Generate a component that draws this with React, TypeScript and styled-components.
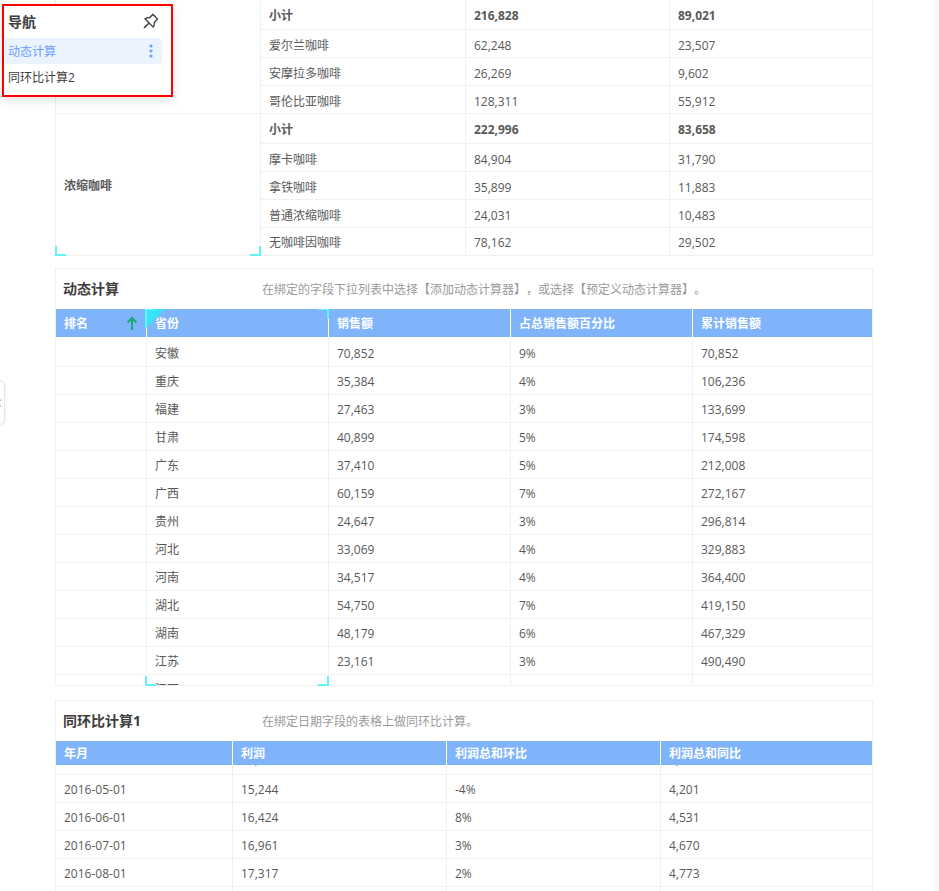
import React from "react";
import styled, { createGlobalStyle } from "styled-components";
import { AiOutlinePushpin } from "react-icons/ai";

const Global = createGlobalStyle`
  html, body { margin: 0; padding: 0; background: #fff; overflow: hidden; }
  body {
    font-family: "Open Sans", "Noto Sans CJK SC", sans-serif;
    font-size: 12px;
    color: #595959;
    text-spacing-trim: space-all;
  }
`;

const LINE = "#f0f0f0";
const CYAN = "#5ef7f7";

const Page = styled.div`
  position: relative;
  display: flex;
  width: 939px;
  height: 891px;
  overflow: hidden;
`;
const Main = styled.main`
  flex: 1;
  padding-left: 55px;
`;
const Gutter = styled.div`
  width: 5px;
  background: #f7f7f7;
`;
const Stack = styled.div`
  width: 818px;
  display: flex;
  flex-direction: column;
`;
const TopFrame = styled.div`
  border: 1px solid ${LINE};
  border-top: 0;
`;
const Card = styled.section<{ $gap: number }>`
  position: relative;
  margin-top: ${(p) => p.$gap}px;
  border: 1px solid ${LINE};
  box-sizing: border-box;
  flex-shrink: 0;
`;
const CardHead = styled.header`
  display: flex;
  align-items: center;
  height: 40px;
  padding-left: 7px;
`;
const CardTitle = styled.h2`
  margin: 0 0 2px;
  width: 199px;
  font-size: 14px;
  font-weight: 700;
  color: #3d3d3d;
`;
const CardDesc = styled.p`
  margin: 0;
  font-size: 12px;
  color: #9a9a9a;
`;
const Table = styled.table`
  width: 816px;
  table-layout: fixed;
  border-collapse: separate;
  border-spacing: 0;
`;
const Row = styled.tr<{ $h: number }>`
  height: ${(p) => p.$h}px;
`;
const Cell = styled.td<{ $bold?: boolean; $lift?: number; $flush?: boolean; $anchor?: boolean; $top?: boolean }>`
  box-sizing: border-box;
  padding: ${(p) => p.$lift ?? 2}px 8px 0;
  font-size: 12px;
  line-height: 16px;
  white-space: nowrap;
  color: #595959;
  vertical-align: ${(p) => (p.$top ? "top" : "middle")};
  font-weight: ${(p) => (p.$bold ? 700 : 400)};
  border-right: 1px solid ${LINE};
  border-bottom: ${(p) => (p.$flush ? "0" : `1px solid ${LINE}`)};
  ${(p) => (p.$anchor ? "position: relative;" : "")}
  &:last-child { border-right: 0; }
`;
const HeadCell = styled.th`
  position: relative;
  box-sizing: border-box;
  padding: 2px 8px 0;
  background: #80b4fa;
  color: #fff;
  font-size: 12px;
  line-height: 16px;
  font-weight: 700;
  text-align: left;
  border-right: 1px solid #fff;
  &:last-child { border-right: 0; }
`;
const SortArrow = styled.svg`
  position: absolute;
  right: 8px;
  top: 7px;
  width: 12px;
  height: 15px;
`;
const Wedge = styled.span`
  position: absolute;
  left: 0;
  top: 0;
  width: 0;
  height: 0;
  border-top: 18px solid #38e3f7;
  border-right: 18px solid transparent;
`;
const BodyClip = styled.div<{ $offset: number; $height?: number }>`
  overflow: hidden;
  ${(p) => (p.$height ? `height: ${p.$height}px;` : "")}
  & > table { margin-top: ${(p) => p.$offset}px; }
`;
const Mark = styled.i<{ $v: "top" | "bottom"; $h: "left" | "right"; $tall?: number }>`
  position: absolute;
  width: 11px;
  height: ${(p) => p.$tall ?? 10}px;
  ${(p) => p.$v}: ${(p) => (p.$v === "top" ? 0 : -1)}px;
  ${(p) => p.$h}: -1px;
  border-${(p) => p.$v}: ${(p) => (p.$v === "top" ? 1 : 2)}px solid ${CYAN};
  border-${(p) => p.$h}: 2px solid ${CYAN};
  box-sizing: border-box;
`;
const Selection = styled.div`
  position: absolute;
  left: 90px;
  width: 182px;
  top: 40px;
  bottom: 0;
  pointer-events: none;
`;
const Nav = styled.aside`
  position: absolute;
  left: 2px;
  top: 4px;
  width: 171px;
  height: 93px;
  box-sizing: border-box;
  border: 2px solid #ff0000;
  background: #fff;
  box-shadow: 0 3px 10px rgba(0, 0, 0, 0.12);
  padding: 0 9px 0 1px;
  display: flex;
  flex-direction: column;
`;
const NavHead = styled.div`
  display: flex;
  align-items: center;
  justify-content: space-between;
  box-sizing: border-box;
  height: 32px;
  padding: 0 1px 3px 3px;
  color: #3d3d3d;
  font-size: 14px;
  font-weight: 700;
`;
const NavItem = styled.div<{ $active?: boolean }>`
  display: flex;
  align-items: center;
  justify-content: space-between;
  height: 26px;
  padding: 0 9px 0 3px;
  border-radius: 4px;
  font-size: 12px;
  color: ${(p) => (p.$active ? "#6a9fff" : "#3d3d3d")};
  background: ${(p) => (p.$active ? "#ebf3ff" : "transparent")};
`;
const Handle = styled.div`
  position: absolute;
  left: -8px;
  top: 380px;
  width: 13px;
  height: 45px;
  box-sizing: border-box;
  display: flex;
  align-items: center;
  justify-content: flex-end;
  padding-right: 2px;
  border: 1px solid #e4e6ea;
  border-radius: 6px;
  background: #fff;
  box-shadow: 0 1px 3px rgba(0, 0, 0, 0.08);
`;

const Dots = () => (
  <svg width="4" height="14" viewBox="0 0 4 14" aria-hidden>
    <circle cx="2" cy="2" r="1.6" fill="#6a9fff" />
    <circle cx="2" cy="7" r="1.6" fill="#6a9fff" />
    <circle cx="2" cy="12" r="1.6" fill="#6a9fff" />
  </svg>
);

const groupA = [
  ["小计", "216,828", "89,021"],
  ["爱尔兰咖啡", "62,248", "23,507"],
  ["安摩拉多咖啡", "26,269", "9,602"],
  ["哥伦比亚咖啡", "128,311", "55,912"],
];
const groupB = [
  ["小计", "222,996", "83,658"],
  ["摩卡咖啡", "84,904", "31,790"],
  ["拿铁咖啡", "35,899", "11,883"],
  ["普通浓缩咖啡", "24,031", "10,483"],
  ["无咖啡因咖啡", "78,162", "29,502"],
];
const provinces = [
  ["", "安徽", "70,852", "9%", "70,852"],
  ["", "重庆", "35,384", "4%", "106,236"],
  ["", "福建", "27,463", "3%", "133,699"],
  ["", "甘肃", "40,899", "5%", "174,598"],
  ["", "广东", "37,410", "5%", "212,008"],
  ["", "广西", "60,159", "7%", "272,167"],
  ["", "贵州", "24,647", "3%", "296,814"],
  ["", "河北", "33,069", "4%", "329,883"],
  ["", "河南", "34,517", "4%", "364,400"],
  ["", "湖北", "54,750", "7%", "419,150"],
  ["", "湖南", "48,179", "6%", "467,329"],
  ["", "江苏", "23,161", "3%", "490,490"],
  ["", "江西", "", "", ""],
];
const months = [
  ["2016-04-01", "14,205", "", "3,912"],
  ["2016-05-01", "15,244", "-4%", "4,201"],
  ["2016-06-01", "16,424", "8%", "4,531"],
  ["2016-07-01", "16,961", "3%", "4,670"],
  ["2016-08-01", "17,317", "2%", "4,773"],
  ["2016-09-01", "17,640", "2%", "4,860"],
];

const Cols = ({ widths }: { widths: number[] }) => (
  <colgroup>
    {widths.map((w, i) => (
      <col key={i} width={w} />
    ))}
  </colgroup>
);

const Group = ({ title, rows, marks }: { title: string; rows: string[][]; marks?: boolean }) => (
  <>
    {rows.map((r, i) => {
      const sum = i === 0;
      const last = marks && i === rows.length - 1;
      return (
        <Row key={i} $h={sum ? 30 : last ? 27 : 28}>
          {i === 0 && (
            <Cell rowSpan={rows.length} $bold $flush={marks} $anchor>
              {title}
              {marks && <Mark $v="bottom" $h="left" />}
              {marks && <Mark $v="bottom" $h="right" />}
            </Cell>
          )}
          {r.map((v, j) => (
            <Cell key={j} $bold={sum} $flush={last} $lift={sum ? 2 : last ? 3 : 4}>
              {v}
            </Cell>
          ))}
        </Row>
      );
    })}
  </>
);

const w2 = [91, 182, 182, 182, 179];
const w3 = [177, 214, 214, 211];

export default function App() {
  return (
    <Page>
      <Global />
      <Main>
        <Stack>
          <TopFrame>
            <Table>
              <Cols widths={[205, 205, 204, 202]} />
              <tbody>
                <Group title="" rows={groupA} />
                <Group title="浓缩咖啡" rows={groupB} marks />
              </tbody>
            </Table>
          </TopFrame>

          <Card $gap={12}>
            <CardHead>
              <CardTitle>动态计算</CardTitle>
              <CardDesc>在绑定的字段下拉列表中选择【添加动态计算器】，或选择【预定义动态计算器】。</CardDesc>
            </CardHead>
            <Table>
              <Cols widths={w2} />
              <thead>
                <Row $h={28}>
                  <HeadCell>
                    排名
                    <SortArrow viewBox="0 0 12 15" aria-hidden>
                      <path d="M6 14V2M1.5 6.5 6 2l4.5 4.5" fill="none" stroke="#1aa870" strokeWidth="2" />
                    </SortArrow>
                  </HeadCell>
                  <HeadCell>
                    <Wedge />
                    省份
                  </HeadCell>
                  <HeadCell>销售额</HeadCell>
                  <HeadCell>占总销售额百分比</HeadCell>
                  <HeadCell>累计销售额</HeadCell>
                </Row>
              </thead>
            </Table>
            <BodyClip $offset={0} $height={348}>
              <Table>
                <Cols widths={w2} />
                <tbody>
                  {provinces.map((r, i) => (
                    <Row key={i} $h={i === 0 ? 30 : 28}>
                      {r.map((v, j) => (
                        <Cell key={j} $lift={i === 0 ? 4 : 2}>
                          {v}
                        </Cell>
                      ))}
                    </Row>
                  ))}
                </tbody>
              </Table>
            </BodyClip>
            <Selection>
              <Mark $v="top" $h="left" $tall={19} />
              <Mark $v="top" $h="right" />
              <Mark $v="bottom" $h="left" />
              <Mark $v="bottom" $h="right" />
            </Selection>
          </Card>

          <Card $gap={14}>
            <CardHead>
              <CardTitle>同环比计算1</CardTitle>
              <CardDesc>在绑定日期字段的表格上做同环比计算。</CardDesc>
            </CardHead>
            <Table>
              <Cols widths={w3} />
              <thead>
                <Row $h={24}>
                  <HeadCell>年月</HeadCell>
                  <HeadCell>利润</HeadCell>
                  <HeadCell>利润总和环比</HeadCell>
                  <HeadCell>利润总和同比</HeadCell>
                </Row>
              </thead>
            </Table>
            <BodyClip $offset={-18}>
              <Table>
                <Cols widths={w3} />
                <tbody>
                  {months.map((r, i) => (
                    <Row key={i} $h={28}>
                      {r.map((v, j) => (
                        <Cell key={j} $top={i === 0} $lift={i === 0 ? 5 : 2}>
                          {v}
                        </Cell>
                      ))}
                    </Row>
                  ))}
                </tbody>
              </Table>
            </BodyClip>
          </Card>
        </Stack>
      </Main>
      <Gutter />

      <Nav>
        <NavHead>
          导航
          <AiOutlinePushpin size={20} color="#444" />
        </NavHead>
        <NavItem $active>
          动态计算
          <Dots />
        </NavItem>
        <NavItem>同环比计算2</NavItem>
      </Nav>
      <Handle>
        <svg width="4" height="10" viewBox="0 0 4 10" aria-hidden>
          <path d="M3 1.5 0 5l3 3.5" fill="none" stroke="#8c8c8c" strokeWidth="1" />
        </svg>
      </Handle>
    </Page>
  );
}
